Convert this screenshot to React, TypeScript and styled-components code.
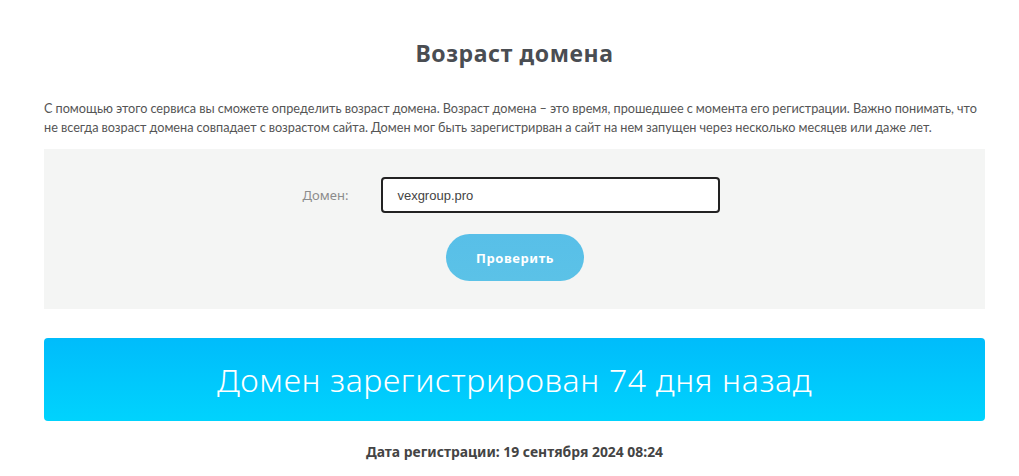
import React, { FC } from "react"
import styled, { createGlobalStyle } from "styled-components"

const GlobalStyle = createGlobalStyle`
  body {
    margin: 0;
    background: #fff;
    font-family: "Lato", "Liberation Sans", sans-serif;
  }
`

const Page = styled.div`
  width: 941px;
  margin-left: 44px;
  display: flex;
  flex-direction: column;
`

const Title = styled.h1`
  margin: 40px 0 0;
  text-align: center;
  font-family: "Noto Sans", "Liberation Sans", sans-serif;
  font-size: 23px;
  line-height: 26px;
  font-weight: 700;
  letter-spacing: 0.6px;
  color: #4a4d52;
`

const Description = styled.p`
  margin: 33px 0 0;
  font-size: 12.7px;
  line-height: 19px;
  word-spacing: -0.2px;
  color: #555;
`

const Panel = styled.div`
  margin-top: 12px;
  height: 160px;
  box-sizing: border-box;
  padding-top: 28px;
  background: #f4f5f4;
  display: flex;
  flex-direction: column;
  align-items: center;
`

const FieldRow = styled.div`
  display: flex;
  align-items: center;
  gap: 33px;
  margin-left: -6px;
`

const Label = styled.label`
  font-family: "Noto Sans", "Liberation Sans", sans-serif;
  font-size: 13px;
  color: #8c8c8c;
`

const Input = styled.input`
  width: 339px;
  height: 36px;
  box-sizing: border-box;
  border: 2px solid #222;
  border-radius: 4px;
  padding: 0 14px;
  font-family: "Liberation Sans", sans-serif;
  font-size: 13px;
  color: #444;
  background: #fff;
  outline: none;
`

const CheckButton = styled.button`
  margin-top: 21px;
  margin-left: 1px;
  width: 138px;
  height: 47px;
  border: none;
  border-radius: 24px;
  background: linear-gradient(180deg, #58bfe8 0%, #5bc2e7 100%);
  color: #fff;
  font-family: "Noto Sans", "Liberation Sans", sans-serif;
  font-size: 13px;
  font-weight: 700;
  letter-spacing: 0.6px;
  cursor: pointer;
`

const Banner = styled.div`
  margin-top: 29px;
  height: 83px;
  border-radius: 4px;
  background: linear-gradient(180deg, #00bcfb 0%, #00d3fd 100%);
  display: flex;
  align-items: center;
  justify-content: center;
  color: #fff;
  font-family: "Noto Sans", "Liberation Sans", sans-serif;
  font-size: 32px;
  font-weight: 300;
  letter-spacing: 0.65px;
`

const DateLine = styled.div`
  margin-top: 21px;
  text-align: center;
  font-family: "Noto Sans", "Liberation Sans", sans-serif;
  font-size: 13.9px;
  font-weight: 700;
  color: #444;
`

const App: FC = () => {
  return (
    <>
      <GlobalStyle />
      <Page>
        <Title>Возраст домена</Title>
        <Description>
          С помощью этого сервиса вы сможете определить возраст домена. Возраст домена – это время, прошедшее с момента его регистрации. Важно понимать, что не всегда возраст домена совпадает с возрастом сайта. Домен мог быть зарегистрирван а сайт на нем запущен через несколько месяцев или даже лет.
        </Description>
        <Panel>
          <FieldRow>
            <Label>Домен:</Label>
            <Input defaultValue="vexgroup.pro" />
          </FieldRow>
          <CheckButton>Проверить</CheckButton>
        </Panel>
        <Banner>Домен зарегистрирован 74 дня назад</Banner>
        <DateLine>Дата регистрации: 19 сентября 2024 08:24</DateLine>
      </Page>
    </>
  )
}

export default App
